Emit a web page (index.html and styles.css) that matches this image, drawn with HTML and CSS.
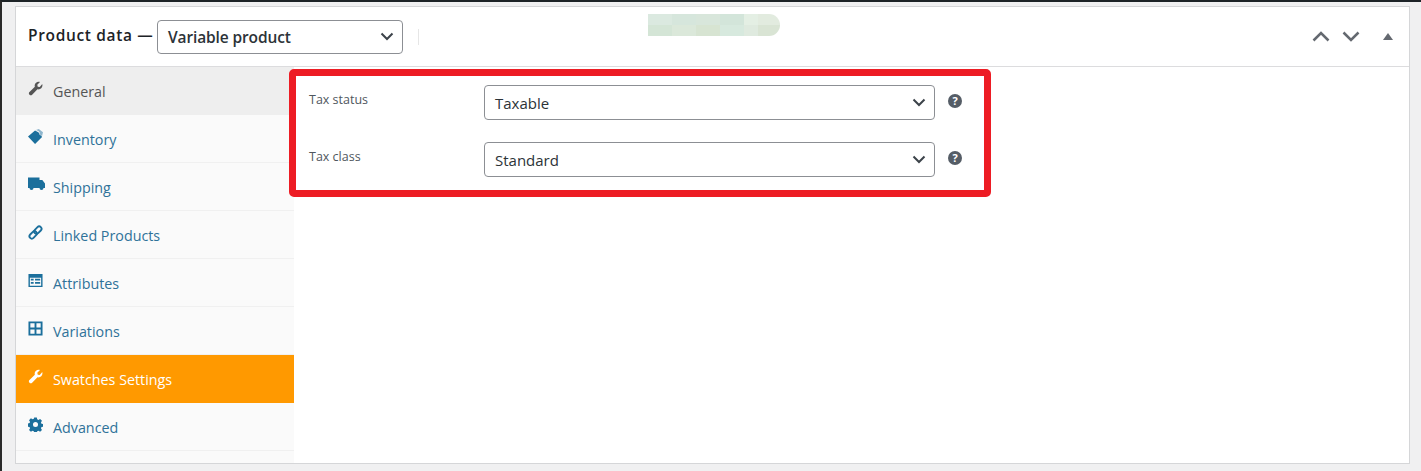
FILE: index.html
```html
<!DOCTYPE html>
<html lang="en">
<head>
  <meta charset="UTF-8" />
  <meta name="viewport" content="width=device-width, initial-scale=1.0"/>
  <title>Product data</title>
  <link rel="stylesheet" href="styles.css">
</head>
<body>

  <div class="panel">
    <div class="panel-head">
      <h2 class="panel-title">Product data —</h2>
      <div class="select select-type">
        <span>Variable product</span>
        <svg class="chevron" viewBox="0 0 14 9"><path d="M1.500 1.500 7 7l5.500-5.500"/></svg>
      </div>
      <span class="divider"></span>
      <span class="blurred"></span>
      <div class="panel-actions">
        <svg class="arrow" viewBox="0 0 18 11"><path d="M1.500 9.500 9 2l7.500 7.500"/></svg>
        <svg class="arrow" viewBox="0 0 18 11"><path d="M1.500 1.500 9 9l7.500-7.500"/></svg>
        <svg class="caret" viewBox="0 0 10 7"><path d="M5 0l5 7H0z"/></svg>
      </div>
    </div>

    <div class="panel-body">
      <ul class="tabs">
        <li class="tab tab-current">
          <svg class="tab-icon" viewBox="0 0 16 16"><path d="M15.200 3.300c.5 1.700.1 3.400-1.100 4.500-1.100 1.100-2.600 1.400-4 1L4.400 14.600c-.8.800-2 .8-2.800 0-.9-.8-.9-2 0-2.800l5.700-5.700c-.4-1.400-.1-2.900 1-4C9.500.9 11.200.5 12.800 1L9.900 3.900l.5 2.100 2.100.5z"/></svg>
          General
        </li>
        <li class="tab">
          <svg class="tab-icon" viewBox="0 0 16 16"><path d="M7.500 1.500 0 8l7.500 8 7.500-7.500-1-1.500-1.500-.5-.5-2-1-1z"/><path class="tab-icon-soft" d="M8.500 1 11.500 0 16 3.500l-1 4-2-1.500-.5-2-1-1.500z"/></svg>
          Inventory
        </li>
        <li class="tab">
          <svg class="tab-icon tab-icon-wide" viewBox="0 0 17 14"><path d="M0 .5h11.500V3h2.800L17 6.500V11h-1.500a2 2 0 0 1-4 0h-6a2 2 0 0 1-4 0H0z"/></svg>
          Shipping
        </li>
        <li class="tab">
          <svg class="tab-icon tab-icon-line" viewBox="0 0 16 16"><g transform="rotate(-45 8 8)"><rect x="0" y="5.500" width="9" height="5" rx="2.500"/><rect x="7" y="5.500" width="9" height="5" rx="2.500"/></g></svg>
          Linked Products
        </li>
        <li class="tab">
          <svg class="tab-icon" viewBox="0 0 16 16"><path fill-rule="evenodd" d="M.5 1h15v14H.5zM2 5v8.500h12V5zM3 6h3v2H3zm4.500 0H13v2H7.500zM3 9.500h3v2H3zm4.500 0H13v2H7.500z"/></svg>
          Attributes
        </li>
        <li class="tab">
          <svg class="tab-icon" viewBox="0 0 16 16"><path fill-rule="evenodd" d="M.5.500h15v15H.5zm2 2v4.500H7V2.500zm6.500 0v4.500h4.500V2.500zM2.500 9v4.500H7V9zM9 9v4.500h4.500V9z"/></svg>
          Variations
        </li>
        <li class="tab tab-active">
          <svg class="tab-icon" viewBox="0 0 16 16"><path d="M15.200 3.300c.5 1.700.1 3.400-1.100 4.500-1.100 1.100-2.600 1.400-4 1L4.400 14.600c-.8.800-2 .8-2.800 0-.9-.8-.9-2 0-2.800l5.700-5.700c-.4-1.400-.1-2.900 1-4C9.500.9 11.200.5 12.800 1L9.900 3.900l.5 2.100 2.100.5z"/></svg>
          Swatches Settings
        </li>
        <li class="tab">
          <svg class="tab-icon" viewBox="0 0 16 16"><path fill-rule="evenodd" d="M6.600 1h2.800l.4 2 1.300.6 1.800-1.100 2 2-1.100 1.800.6 1.300 2 .4v2.800l-2 .4-.6 1.300 1.100 1.800-2 2-1.800-1.100-1.300.6-.4 2H6.600l-.4-2-1.300-.6-1.800 1.100-2-2 1.100-1.800-.6-1.300-2-.4V7.400l2-.4.6-1.300-1.100-1.800 2-2 1.800 1.100 1.300-.6zM8 5.800a2.700 2.700 0 1 0 0 5.400 2.700 2.700 0 0 0 0-5.400z" transform="translate(0 -.5)"/></svg>
          Advanced
        </li>
      </ul>

      <div class="fields">
        <div class="field">
          <label class="field-label">Tax status</label>
          <div class="select select-field">
            <span>Taxable</span>
            <svg class="chevron" viewBox="0 0 14 9"><path d="M1.500 1.500 7 7l5.500-5.500"/></svg>
          </div>
          <span class="help">?</span>
        </div>
        <div class="field">
          <label class="field-label">Tax class</label>
          <div class="select select-field">
            <span>Standard</span>
            <svg class="chevron" viewBox="0 0 14 9"><path d="M1.500 1.500 7 7l5.500-5.500"/></svg>
          </div>
          <span class="help">?</span>
        </div>
      </div>
    </div>

    <div class="highlight"></div>
  </div>

</body>
</html>
```

FILE: styles.css
```css
:root {
  --link: #2f7299;
  --icon: #1b6f9c;
  --text: #50575e;
  --border: #dcdcde;
  --orange: #ff9900;
  --red: #ed1c24;
}

* {
  box-sizing: border-box;
}

html, body {
  height: 100%;
}

body {
  margin: 0;
  padding: 4px 11px 7px 13px;
  overflow: hidden;
  background: #f0f0f1;
  border-top: 2px solid #1d2327;
  border-left: 2px solid #2a2a2a;
  font-family: 'Open Sans', sans-serif;
  color: var(--text);
}

.panel {
  position: relative;
  height: 100%;
  display: flex;
  flex-direction: column;
  background: #fff;
  border: 1px solid #d5d6d8;
}

.panel-head {
  flex: none;
  height: 60px;
  padding: 0 0 0 12px;
  display: flex;
  align-items: center;
  border-bottom: 1px solid var(--border);
}

.panel-title {
  width: 129px;
  margin: -3px 0 0;
  font-size: 15.500px;
  font-weight: 600;
  letter-spacing: .65px;
  color: #1d2327;
  white-space: nowrap;
}

.select {
  display: flex;
  align-items: center;
  justify-content: space-between;
  background: #fff;
  border: 1px solid #8c8f94;
  border-radius: 4px;
  font-size: 15px;
  color: #2c3338;
  padding: 0 8px 0 10px;
}

.select-type {
  width: 246px;
  height: 34px;
  font-size: 15.500px;
  font-weight: 600;
  letter-spacing: -.12px;
}

.select-field {
  width: 451px;
  height: 35px;
}

.chevron {
  width: 14px;
  height: 9px;
  fill: none;
  stroke: #3c434a;
  stroke-width: 2;
}

.divider {
  width: 1px;
  height: 16px;
  margin: 0 0 0 15px;
  background: #e6e6e6;
}

.blurred {
  width: 132px;
  height: 22px;
  margin: -24px 0 0 229px;
  border-radius: 0 11px 11px 0;
  background:
    linear-gradient(90deg, #dbe9e0 0 24px, #d6e6dc 24px 48px, #d8e6db 48px 72px, #d3e5da 72px 96px, #e4efe4 96px 110px, #e2ebdf 110px 132px) top / 100% 50% no-repeat,
    linear-gradient(90deg, #d4e5d6 0 24px, #dbe8da 24px 48px, #d7e4d2 48px 72px, #d7e9de 72px 96px, #dfeadf 96px 110px, #d9e4d4 110px 132px) bottom / 100% 50% no-repeat;
}

.panel-actions {
  margin-left: auto;
  margin-right: 16px;
  display: flex;
  align-items: center;
}

.arrow {
  width: 18px;
  height: 11px;
  margin-right: 12px;
  fill: none;
  stroke: #646970;
  stroke-width: 2.500;
}

.caret {
  width: 10px;
  height: 7px;
  margin-left: 11px;
  fill: #646970;
}

.panel-body {
  flex: 1;
  display: flex;
  min-height: 0;
}

.tabs {
  flex: none;
  width: 278px;
  margin: 0;
  padding: 0;
  list-style: none;
  background: #fafafa;
}

.tab {
  height: 48px;
  padding: 2px 0 0 12px;
  display: flex;
  align-items: center;
  font-size: 14.300px;
  color: var(--link);
  border-bottom: 1px solid #f0f0f0;
}

.tab-current {
  background: #eee;
  color: #555;
  border-bottom-color: #eee;
}

.tab-active {
  background: var(--orange);
  color: #fff;
  border-bottom-color: var(--orange);
}

.tab-icon {
  flex: none;
  width: 15px;
  height: 15px;
  margin: -7px 10px 0 0;
  fill: var(--icon);
}

.tab-icon-soft {
  fill: #8fb6cd;
}

.tab-icon-wide {
  width: 17px;
  height: 14px;
  margin-right: 8px;
}

.tab-icon-line {
  fill: none;
  stroke: var(--icon);
  stroke-width: 2;
}

.tab-current .tab-icon {
  fill: #555;
}

.tab-active .tab-icon {
  fill: #fff;
}

.fields {
  flex: 1;
  padding: 18px 0 0 15px;
  display: flex;
  flex-direction: column;
  gap: 22px;
}

.field {
  display: flex;
  align-items: flex-start;
}

.field-label {
  width: 175px;
  font-size: 12.500px;
  line-height: 30px;
}

.help {
  width: 14px;
  height: 14px;
  margin: 9px 0 0 13px;
  border-radius: 50%;
  background: #555d66;
  color: #fff;
  font-size: 11px;
  font-weight: 700;
  line-height: 14px;
  text-align: center;
}

.highlight {
  position: absolute;
  left: 273px;
  top: 62px;
  width: 702px;
  height: 128px;
  border: 7px solid var(--red);
  border-radius: 5px;
}
```
